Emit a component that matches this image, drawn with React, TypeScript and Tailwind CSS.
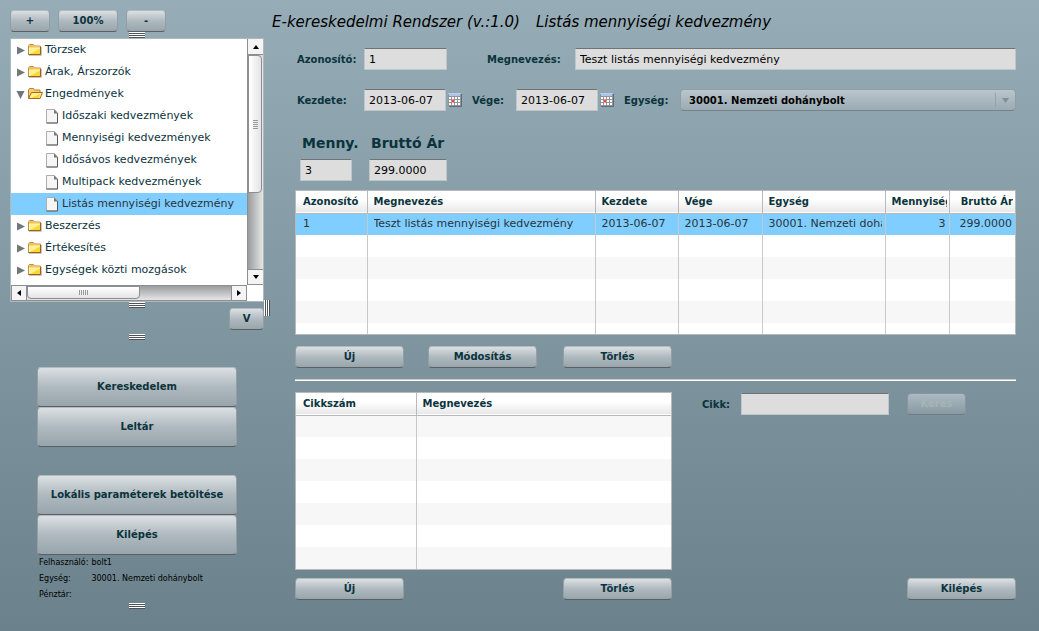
import React from "react";

const treeItems = [
  { label: "Törzsek", kind: "closed" },
  { label: "Árak, Árszorzók", kind: "closed" },
  { label: "Engedmények", kind: "open" },
  { label: "Időszaki kedvezmények", kind: "leaf" },
  { label: "Mennyiségi kedvezmények", kind: "leaf" },
  { label: "Idősávos kedvezmények", kind: "leaf" },
  { label: "Multipack kedvezmények", kind: "leaf" },
  { label: "Listás mennyiségi kedvezmény", kind: "leaf", selected: true },
  { label: "Beszerzés", kind: "closed" },
  { label: "Értékesítés", kind: "closed" },
  { label: "Egységek közti mozgások", kind: "closed" },
];

function FolderClosed() {
  return (
    <svg width="14" height="12" viewBox="0 0 14 12" className="shrink-0">
      <path d="M1 11.5h12.500V3" fill="none" stroke="#cfc5c0" />
      <path d="M.5 10.500v-8.500l1-1.500h4l1 1.500h6v8.500z" fill="#fff6b8" stroke="#c08f45" />
      <path d="M1 2l1-1h3l1 1.500h6v1H1z" fill="#f0c050" />
      <path d="M2 10V4.500h9.500z" fill="#fff08a" />
      <path d="M12 4.500V10H2z" fill="#fbd830" />
      <path d="M.5 10.500h12V3" fill="none" stroke="#9a5f22" />
    </svg>
  );
}

function FolderOpen() {
  return (
    <svg width="15" height="12" viewBox="0 0 15 12" className="shrink-0">
      <path d="M.5 10.500v-8.500l1-1.500h4l1 1.500h5.500v2.500" fill="#f8cf62" stroke="#b5803c" />
      <path d="M.5 10.500 3.500 4.500h11l-2.500 6z" fill="#fff08a" stroke="#a0692a" />
      <path d="M3 10 12 6l-1 4z" fill="#fbd830" />
    </svg>
  );
}

function FileIcon() {
  return (
    <svg width="13" height="15" viewBox="0 0 13 15" className="shrink-0">
      <path d="M.5 14V.5h8l3 3.500v10z" fill="#f6f6f6" stroke="#adadad" />
      <path d="M.5 14H11.500V4" fill="none" stroke="#585858" />
      <path d="M8 .5 12 4.500H8z" fill="#777" />
    </svg>
  );
}

function CalendarIcon() {
  return (
    <svg width="14" height="14" viewBox="0 0 14 14" className="block" shapeRendering="crispEdges">
      <path d="M1 1h13v13H1z" fill="#666b70" />
      <path d="M0 0h13v13H0z" fill="#8f959a" />
      <path d="M0 0h13v1H0z" fill="#c8ccd0" />
      <path d="M1 1h11v2H1z" fill="#a4c8f0" />
      <path
        d="M1 4h2v2H1zM4 4h2v2H4zM7 4h2v2H7zM10 4h2v2h-2zM1 7h2v2H1zM4 7h2v2H4zM7 7h2v2H7zM10 7h2v2h-2zM1 10h2v2H1zM4 10h2v2H4zM7 10h2v2H7zM10 10h2v2h-2z"
        fill="#fff"
      />
      <path d="M4 7h2v2H4z" fill="#ff4040" />
      <path d="M3 8h1v1H3zM6 8h1v1H6zM4 6h2v1H4zM4 9h2v1H4z" fill="#ff8f8f" />
    </svg>
  );
}

const buttonLook =
  "shrink-0 rounded border border-[#969ea3] border-t-[#b4bbbf] border-b-[#5b5f61] bg-linear-to-b from-[#dbe0e3] via-[#afb9bf] to-[#98a5ac] text-center text-[10px] leading-4 font-bold text-[#0b333c]";

function Btn({ className, children }: { className: string; children: React.ReactNode }) {
  return (
    <button type="button" className={`${buttonLook} ${className}`}>
      {children}
    </button>
  );
}

function Grip() {
  return (
    <div className="flex h-[6px] w-4 shrink-0 flex-col justify-between self-center">
      <i className="h-[2px] border-b border-[#4d5459] bg-white" />
      <i className="h-[2px] border-b border-[#4d5459] bg-white" />
      <i className="h-[2px] border-b border-[#4d5459] bg-white" />
    </div>
  );
}

const fieldLook =
  "h-[22px] min-w-0 border border-[#bfc6c9] border-t-[#6e7375] bg-[#dddddd] px-1 text-[11px] text-black";
const labelLook = "shrink-0 text-[10px] font-bold text-[#0b333c]";

function Tree() {
  return (
    <div className="flex flex-col border border-[#b0b8bc] bg-white">
      <div className="flex">
        <ul className="h-[246px] min-w-0 flex-1 overflow-hidden text-[11px] text-[#0b333c]">
          {treeItems.map((item) => (
            <li
              key={item.label}
              className={`flex h-[22px] items-center whitespace-nowrap ${item.selected ? "bg-[#7fceff] text-[#2b333c]" : ""} ${item.kind === "leaf" ? "gap-[3px] pl-[35px]" : "gap-[3px] pl-[5px]"}`}
            >
              {item.kind === "leaf" ? (
                <FileIcon />
              ) : (
                <>
                  <svg width="9" height="9" viewBox="0 0 9 9" className="shrink-0">
                    <path d={item.kind === "open" ? "M.5 1h8l-4 8z" : "M1 .5v8l8-4z"} fill="#6f7777" />
                  </svg>
                  <span className="flex w-[14px] shrink-0">
                    {item.kind === "open" ? <FolderOpen /> : <FolderClosed />}
                  </span>
                </>
              )}
              <span>{item.label}</span>
            </li>
          ))}
        </ul>
        <div className="flex w-4 flex-col border-l border-[#8b8f91] bg-linear-to-r from-[#9a9d9f] to-[#e6e6e6]">
          <div className="flex h-4 items-center justify-center border-b border-[#8b8f91] bg-[#f4f4f4]">
            <svg width="6" height="4"><path d="M0 4 3 0l3 4z" /></svg>
          </div>
          <div className="flex h-[138px] w-[14px] flex-col items-center justify-center rounded-r border border-[#8b8f91] bg-linear-to-r from-white to-[#e4e4e4]">
            <div className="h-[9px] w-[5px] bg-[repeating-linear-gradient(to_bottom,#999_0_1px,transparent_1px_2px)]" />
          </div>
          <div className="flex-1" />
          <div className="flex h-4 items-center justify-center border-y border-[#8b8f91] bg-[#f4f4f4]">
            <svg width="6" height="4"><path d="M0 0h6L3 4z" /></svg>
          </div>
        </div>
      </div>
      <div className="mr-4 flex h-4 border border-[#8b8f91] bg-linear-to-b from-[#9a9d9f] to-[#e6e6e6]">
        <div className="flex w-[15px] items-center justify-center border-r border-[#8b8f91] bg-[#f4f4f4]">
          <svg width="4" height="6"><path d="M4 0v6L0 3z" /></svg>
        </div>
        <div className="flex h-[13px] w-[113px] items-center justify-center rounded-b border border-[#8b8f91] bg-linear-to-b from-white to-[#e4e4e4]">
          <div className="h-[5px] w-[9px] bg-[repeating-linear-gradient(to_right,#999_0_1px,transparent_1px_2px)]" />
        </div>
        <div className="flex-1" />
        <div className="flex w-[15px] items-center justify-center border-l border-[#8b8f91] bg-[#f4f4f4]">
          <svg width="4" height="6"><path d="M0 0v6l4-3z" /></svg>
        </div>
      </div>
    </div>
  );
}

type Column = { title: string; width: string; right?: boolean };

function Grid({ columns, rows, name }: { columns: Column[]; rows: { cells: string[]; look: string }[]; name: string }) {
  return (
    <table aria-label={name} className="w-full table-fixed border-collapse text-[11px] text-[#2b333c]">
      <colgroup>
        {columns.map((c) => (
          <col key={c.title} className={c.width} />
        ))}
      </colgroup>
      <thead>
        <tr className="h-[22px] border-b border-[#b7babc] bg-linear-to-b from-white from-40% to-[#e8e8e8]">
          {columns.map((c) => (
            <th
              key={c.title}
              className="border-r border-[#b7babc] py-0 pr-[2px] pl-[6px] text-[10px] leading-4 font-bold text-[#0b333c] first:pl-[7px] last:border-r-0"
            >
              <div className={`overflow-hidden whitespace-nowrap ${c.right ? "text-right" : "text-left"}`}>{c.title}</div>
            </th>
          ))}
        </tr>
      </thead>
      <tbody>
        {rows.map((r, i) => (
          <tr key={i} className={r.look}>
            {columns.map((c, j) => (
              <td
                key={c.title}
                className="border-r border-[#c6c9cb] py-0 pr-[3px] pl-[6px] leading-4 first:pl-[7px] last:border-r-0"
              >
                <div className={`overflow-hidden whitespace-nowrap ${c.right ? "text-right" : ""}`}>{r.cells[j]}</div>
              </td>
            ))}
          </tr>
        ))}
      </tbody>
    </table>
  );
}

const white = { cells: [], look: "h-[22px] bg-white" };
const grey = { cells: [], look: "h-[22px] bg-[#f7f7f7]" };

const discountColumns: Column[] = [
  { title: "Azonosító", width: "w-[71px]" },
  { title: "Megnevezés", width: "w-auto" },
  { title: "Kezdete", width: "w-[83px]" },
  { title: "Vége", width: "w-[84px]" },
  { title: "Egység", width: "w-[123px]" },
  { title: "Mennyiség", width: "w-[64px]", right: true },
  { title: "Bruttó Ár", width: "w-[66px]", right: true },
];

const discountRows = [
  {
    cells: ["1", "Teszt listás mennyiségi kedvezmény", "2013-06-07", "2013-06-07", "30001. Nemzeti dohánybolt", "3", "299.0000"],
    look: "h-[22px] bg-[#7fceff]",
  },
  white,
  grey,
  white,
  grey,
  { cells: [], look: "h-[11px] bg-white" },
];

const itemColumns: Column[] = [
  { title: "Cikkszám", width: "w-[120px]" },
  { title: "Megnevezés", width: "w-auto" },
];

export default function App() {
  return (
    <div className="flex min-h-screen bg-linear-to-b from-[#96adb7] to-[#6b818b] font-['DejaVu_Sans',sans-serif]">
      <aside className="flex w-[264px] shrink-0 flex-col pt-[10px] pl-[10px]">
        <div className="flex gap-2">
          <Btn className="h-[22px] w-10">+</Btn>
          <Btn className="h-[22px] w-[60px]">100%</Btn>
          <Btn className="h-[22px] w-10">-</Btn>
        </div>
        <Grip />
        <Tree />
        <Grip />
        <Btn className="h-[22px] w-[35px] self-end">V</Btn>
        <div className="h-1" />
        <Grip />
        <div className="mt-[27px] flex w-[200px] flex-col self-center">
          <Btn className="h-10">Kereskedelem</Btn>
          <Btn className="h-10">Leltár</Btn>
          <Btn className="mt-7 h-10">Lokális paraméterek betöltése</Btn>
          <Btn className="h-10">Kilépés</Btn>
          <dl className="grid grid-cols-[auto_1fr] gap-x-[3px] pl-[2px] text-[8px] leading-4 text-black">
            <dt>Felhasználó:</dt>
            <dd>bolt1</dd>
            <dt>Egység:</dt>
            <dd>30001. Nemzeti dohánybolt</dd>
            <dt>Pénztár:</dt>
            <dd />
          </dl>
        </div>
        <Grip />
      </aside>
      <div className="flex w-2 shrink-0 items-center pb-4">
        <div className="flex h-4 w-[6px] justify-between">
          <i className="w-[2px] border-r border-[#4d5459] bg-white" />
          <i className="w-[2px] border-r border-[#4d5459] bg-white" />
          <i className="w-[2px] border-r border-[#4d5459] bg-white" />
        </div>
      </div>
      <main className="min-w-0 flex-1 pt-[10px] pr-[23px]">
        <h1 className="flex h-6 items-center gap-4 text-[15px] whitespace-nowrap text-black italic">
          <span>E-kereskedelmi Rendszer (v.:1.0)</span>
          <span>Listás mennyiségi kedvezmény</span>
        </h1>
        <div className="pl-[23px]">
          <div className="mt-[14px] flex items-center pl-[2px]">
            <label htmlFor="azon" className={`${labelLook} w-[67px]`}>Azonosító:</label>
            <input id="azon" defaultValue="1" className={`${fieldLook} w-[83px]`} />
            <label htmlFor="megn" className={`${labelLook} ml-10 w-[88px]`}>Megnevezés:</label>
            <input id="megn" defaultValue="Teszt listás mennyiségi kedvezmény" className={`${fieldLook} flex-1`} />
          </div>
          <div className="mt-[19px] flex items-center pl-[2px]">
            <label htmlFor="kezd" className={`${labelLook} w-[67px]`}>Kezdete:</label>
            <input id="kezd" defaultValue="2013-06-07" className={`${fieldLook} w-[82px]`} />
            <button type="button" aria-label="Kezdete naptár" className="ml-[2px]"><CalendarIcon /></button>
            <label htmlFor="vege" className={`${labelLook} ml-[10px] w-11`}>Vége:</label>
            <input id="vege" defaultValue="2013-06-07" className={`${fieldLook} w-[82px]`} />
            <button type="button" aria-label="Vége naptár" className="ml-[2px]"><CalendarIcon /></button>
            <label htmlFor="egys" className={`${labelLook} ml-[10px] w-14`}>Egység:</label>
            <div className="grid min-w-0 flex-1 items-center">
              <select id="egys" className="col-start-1 row-start-1 h-[22px] w-full appearance-none rounded border border-[#929da3] border-b-[#75828a] bg-linear-to-b from-[#bac5cc] to-[#9aabb4] px-2 text-[10px] font-bold text-black">
                <option>30001. Nemzeti dohánybolt</option>
              </select>
              <span className="pointer-events-none col-start-1 row-start-1 mr-[7px] flex h-[14px] items-center justify-self-end border-l border-[#98a2a8] pl-[6px]">
                <svg width="7" height="5"><path d="M0 0h7L3.500 5z" fill="#858d91" /></svg>
              </span>
            </div>
          </div>
          <div className="mt-[22px] flex gap-[17px] pl-[5px] text-[14px] font-bold text-[#0b333c]">
            <div className="flex w-[52px] flex-col whitespace-nowrap">
              <label htmlFor="menny" className="pl-[2px] leading-5">Menny.</label>
              <input id="menny" defaultValue="3" className={`${fieldLook} mt-[6px] w-[52px] font-normal`} />
            </div>
            <div className="flex flex-col whitespace-nowrap">
              <label htmlFor="brutto" className="pl-[2px] leading-5">Bruttó Ár</label>
              <input id="brutto" defaultValue="299.0000" className={`${fieldLook} mt-[6px] w-[78px] font-normal`} />
            </div>
          </div>
          <div className="mt-[9px] border border-[#b7babc]">
            <Grid name="Kedvezmények" columns={discountColumns} rows={discountRows} />
          </div>
          <div className="mt-[11px] flex">
            <Btn className="h-[22px] w-[109px]">Új</Btn>
            <Btn className="ml-6 h-[22px] w-[109px]">Módosítás</Btn>
            <Btn className="ml-[26px] h-[22px] w-[109px]">Törlés</Btn>
          </div>
          <hr className="mt-[11px] h-[2px] border-0 border-t border-[#c5cccf] bg-white" />
          <div className="mt-[11px] flex">
            <div className="w-[377px] shrink-0 border border-[#b7babc]">
              <Grid name="Cikkek" columns={itemColumns} rows={[grey, white, grey, white, grey, white, grey]} />
            </div>
            <div className="flex h-6 items-center pl-[30px]">
              <label htmlFor="cikk" className={`${labelLook} w-[39px]`}>Cikk:</label>
              <input id="cikk" className={`${fieldLook} w-[148px]`} />
              <button type="button" disabled className="ml-[18px] h-[22px] w-[59px] rounded border border-[#8a969c] border-b-[#727d83] bg-linear-to-b from-[#abbac3] to-[#8999a2] text-[10px] leading-4 font-bold text-[#a8b3b5]">
                Keres
              </button>
            </div>
          </div>
          <div className="mt-2 flex">
            <Btn className="h-[22px] w-[109px]">Új</Btn>
            <Btn className="ml-[159px] h-[22px] w-[109px]">Törlés</Btn>
            <Btn className="ml-auto h-[22px] w-[109px]">Kilépés</Btn>
          </div>
        </div>
      </main>
    </div>
  );
}
